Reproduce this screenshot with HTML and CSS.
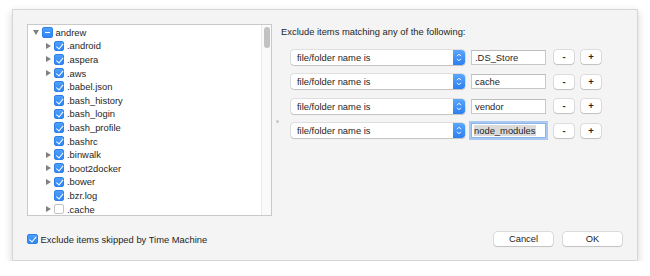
FILE: index.html
```html
<!DOCTYPE html>
<html>
<head>
<meta charset="utf-8">
<link rel="stylesheet" href="styles.css">
</head>
<body>
<div class="window">
  <div class="main">
    <div class="tree">
      <div class="tree-rows">
        <div class="row l0"><span class="arrow down"></span><span class="cb mixed"></span><span class="label">andrew</span></div>
        <div class="row l1"><span class="arrow right"></span><span class="cb on"></span><span class="label">.android</span></div>
        <div class="row l1"><span class="arrow right"></span><span class="cb on"></span><span class="label">.aspera</span></div>
        <div class="row l1"><span class="arrow right"></span><span class="cb on"></span><span class="label">.aws</span></div>
        <div class="row l1"><span class="arrow"></span><span class="cb on"></span><span class="label">.babel.json</span></div>
        <div class="row l1"><span class="arrow"></span><span class="cb on"></span><span class="label">.bash_history</span></div>
        <div class="row l1"><span class="arrow"></span><span class="cb on"></span><span class="label">.bash_login</span></div>
        <div class="row l1"><span class="arrow"></span><span class="cb on"></span><span class="label">.bash_profile</span></div>
        <div class="row l1"><span class="arrow"></span><span class="cb on"></span><span class="label">.bashrc</span></div>
        <div class="row l1"><span class="arrow right"></span><span class="cb on"></span><span class="label">.binwalk</span></div>
        <div class="row l1"><span class="arrow right"></span><span class="cb on"></span><span class="label">.boot2docker</span></div>
        <div class="row l1"><span class="arrow right"></span><span class="cb on"></span><span class="label">.bower</span></div>
        <div class="row l1"><span class="arrow"></span><span class="cb on"></span><span class="label">.bzr.log</span></div>
        <div class="row l1"><span class="arrow right"></span><span class="cb off"></span><span class="label">.cache</span></div>
      </div>
      <div class="scrolltrack"><div class="thumb"></div></div>
    </div>
    <div class="splitter"><span class="dot"></span></div>
    <div class="rules">
      <div class="heading">Exclude items matching any of the following:</div>
      <div class="rule">
        <div class="popup"><span class="popup-text">file/folder name is</span><span class="stepper"><svg width="6" height="9" viewBox="0 0 6 9"><path d="M1 3.2 L3 1.2 L5 3.2 M1 5.8 L3 7.8 L5 5.8" fill="none" stroke="#fff" stroke-width="1"/></svg></span></div>
        <div class="field">.DS_Store</div>
        <div class="btn small">-</div>
        <div class="btn small">+</div>
      </div>
      <div class="rule">
        <div class="popup"><span class="popup-text">file/folder name is</span><span class="stepper"><svg width="6" height="9" viewBox="0 0 6 9"><path d="M1 3.2 L3 1.2 L5 3.2 M1 5.8 L3 7.8 L5 5.8" fill="none" stroke="#fff" stroke-width="1"/></svg></span></div>
        <div class="field">cache</div>
        <div class="btn small">-</div>
        <div class="btn small">+</div>
      </div>
      <div class="rule">
        <div class="popup"><span class="popup-text">file/folder name is</span><span class="stepper"><svg width="6" height="9" viewBox="0 0 6 9"><path d="M1 3.2 L3 1.2 L5 3.2 M1 5.8 L3 7.8 L5 5.8" fill="none" stroke="#fff" stroke-width="1"/></svg></span></div>
        <div class="field">vendor</div>
        <div class="btn small">-</div>
        <div class="btn small">+</div>
      </div>
      <div class="rule">
        <div class="popup"><span class="popup-text">file/folder name is</span><span class="stepper"><svg width="6" height="9" viewBox="0 0 6 9"><path d="M1 3.2 L3 1.2 L5 3.2 M1 5.8 L3 7.8 L5 5.8" fill="none" stroke="#fff" stroke-width="1"/></svg></span></div>
        <div class="field focused"><span class="sel">node_modules</span></div>
        <div class="btn small">-</div>
        <div class="btn small">+</div>
      </div>
    </div>
  </div>
  <div class="bottom">
    <label class="tm"><span class="cb on"></span><span>Exclude items skipped by Time Machine</span></label>
    <div class="actions">
      <div class="btn wide">Cancel</div>
      <div class="btn wide">OK</div>
    </div>
  </div>
</div>
</body>
</html>
```
FILE: styles.css
```css
html, body {
  margin: 0;
  padding: 0;
  background: #ffffff;
}
body {
  font-family: "Liberation Sans", Arial, sans-serif;
  font-size: 9.4px;
  color: #262626;
  padding: 9px 0 0 12px;
}
.window {
  box-sizing: border-box;
  width: 626px;
  height: 252px;
  background: #f4f4f4;
  border: 1px solid #d6d6d6;
  box-shadow: 0 3px 8px rgba(0,0,0,0.18);
  padding: 14px 15px 0 14px;
  display: flex;
  flex-direction: column;
}
.main {
  display: flex;
  height: 192px;
}
.tree {
  box-sizing: border-box;
  width: 245px;
  height: 192px;
  background: #fff;
  border: 1px solid #c9c9c9;
  display: flex;
  overflow: hidden;
}
.tree-rows {
  flex: 1;
  padding-top: 0.5px;
}
.row {
  height: 13.6px;
  display: flex;
  align-items: center;
}
.row.l0 { padding-left: 4px; }
.row.l1 { padding-left: 15.5px; }
.arrow {
  width: 10px;
  height: 10px;
  display: flex;
  align-items: center;
  justify-content: center;
}
.arrow.right::before {
  content: "";
  border-left: 5px solid #808080;
  border-top: 3.5px solid transparent;
  border-bottom: 3.5px solid transparent;
  margin-left: -1px;
}
.arrow.down::before {
  content: "";
  border-top: 5px solid #808080;
  border-left: 3.5px solid transparent;
  border-right: 3.5px solid transparent;
  margin-left: -2px;
}
.cb {
  box-sizing: border-box;
  width: 10.5px;
  height: 10.5px;
  border-radius: 2px;
  flex: none;
  position: relative;
}
.cb.on, .cb.mixed {
  background: linear-gradient(#4fa0fb, #2e86f5);
  border: 1px solid #2f7fe6;
}
.cb.on::after {
  content: "";
  position: absolute;
  left: 3px;
  top: 0.5px;
  width: 2.5px;
  height: 5.5px;
  border-right: 1.3px solid #fff;
  border-bottom: 1.3px solid #fff;
  transform: rotate(40deg);
}
.cb.mixed::after {
  content: "";
  position: absolute;
  left: 1.5px;
  right: 1.5px;
  top: 3.6px;
  height: 1.4px;
  background: #fff;
}
.cb.off {
  background: #fff;
  border: 1px solid #c4c4c4;
}
.label {
  margin-left: 3px;
  white-space: nowrap;
}
.scrolltrack {
  width: 9px;
  border-left: 1px solid #ececec;
  background: #fafafa;
  padding-top: 2px;
  display: flex;
  justify-content: center;
}
.thumb {
  width: 6px;
  height: 21px;
  border-radius: 3px;
  background: #c2c2c2;
}
.splitter {
  width: 9px;
  display: flex;
  align-items: center;
  justify-content: flex-end;
}
.dot {
  width: 3px;
  height: 3px;
  border-radius: 50%;
  background: #c8c8c8;
  margin-right: 2px;
  position: relative;
  top: 1px;
}
.rules {
  flex: 1;
}
.heading {
  height: 16px;
  line-height: 16px;
  white-space: nowrap;
}
.rule {
  display: flex;
  align-items: center;
  margin-left: 10px;
  height: 15px;
  margin-top: 9.5px;
}
.rule:first-of-type { margin-top: 9px; }
.popup {
  box-sizing: border-box;
  width: 174px;
  height: 15px;
  background: #fff;
  border-radius: 3px;
  box-shadow: 0 0 0 0.5px rgba(0,0,0,0.18), 0 1px 1px rgba(0,0,0,0.12);
  display: flex;
  align-items: center;
  overflow: hidden;
}
.popup-text {
  flex: 1;
  padding-left: 6px;
  white-space: nowrap;
}
.stepper {
  width: 12px;
  height: 15px;
  background: linear-gradient(#5aa7fb, #2b7ff2);
  display: flex;
  align-items: center;
  justify-content: center;
  border-radius: 0 3px 3px 0;
}
.field {
  box-sizing: border-box;
  width: 75px;
  height: 15px;
  margin-left: 6px;
  background: #fff;
  border: 1px solid #c8c8c8;
  border-top-color: #bdbdbd;
  padding-left: 3px;
  line-height: 13px;
  white-space: nowrap;
}
.field.focused {
  border-color: #8bb4ea;
  box-shadow: 0 0 0 2px #a9c9f2;
  padding-left: 2px;
}
.sel {
  background: #dadada;
}
.btn {
  box-sizing: border-box;
  background: #fff;
  border-radius: 3px;
  box-shadow: 0 0 0 0.5px rgba(0,0,0,0.2), 0 1px 1px rgba(0,0,0,0.12);
  text-align: center;
  white-space: nowrap;
}
.btn.small {
  width: 20px;
  height: 14px;
  line-height: 14px;
  margin-left: 7px;
  font-weight: bold;
  font-size: 9.5px;
}
.field + .btn.small { margin-left: 8px; }
.bottom {
  display: flex;
  align-items: center;
  justify-content: space-between;
  margin-top: 16px;
  height: 14px;
}
.tm {
  display: flex;
  align-items: center;
  gap: 3px;
  white-space: nowrap;
}
.actions {
  display: flex;
  gap: 10px;
}
.btn.wide {
  width: 59px;
  height: 14px;
  line-height: 14px;
}
```
